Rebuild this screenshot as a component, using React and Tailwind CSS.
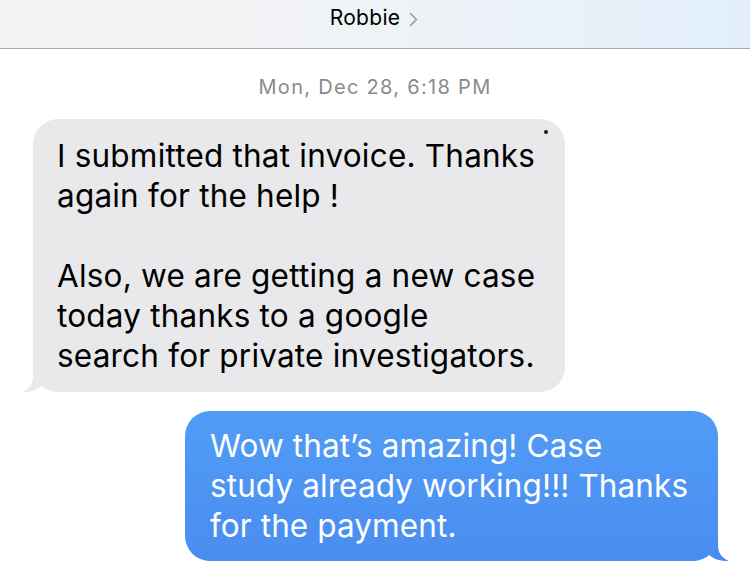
import React from 'react';

const font = { fontFamily: 'Inter, "Noto Sans", sans-serif' };

const LeftTail = ({ className }) => (
  <svg className={`absolute bottom-0 -left-[12px] w-[40px] h-[30px] ${className}`} viewBox="0 0 40 30">
    <path d="M12 0 V14 C12 22 8 27 1 30 C10 30.5 17 28 22 23 C26 27 32 30 40 30 V0 Z" fill="currentColor" />
  </svg>
);

const RightTail = ({ className }) => (
  <svg className={`absolute bottom-0 -right-[12px] w-[40px] h-[30px] ${className}`} viewBox="0 0 40 30">
    <path d="M28 0 V14 C28 22 32 27 39 30 C30 30.5 23 28 18 23 C14 27 8 30 0 30 V0 Z" fill="currentColor" />
  </svg>
);

export default function App() {
  return (
    <div className="w-[750px] h-[585px] bg-white overflow-hidden" style={font}>
      <div className="h-[49px] border-b border-[#a9a9ab] bg-gradient-to-r from-[#f2f2f3] via-[#f0f3f6] to-[#e2effb] flex items-start justify-center pt-[5px]">
        <div className="flex items-center gap-[9px] pr-[2px]">
          <span className="text-[21px] text-black leading-[26px] tracking-[0.3px]">Robbie</span>
          <svg width="9" height="15" viewBox="0 0 9 15" className="mt-[2px]">
            <path d="M1.5 1.5 L7.5 7.5 L1.5 13.5" fill="none" stroke="#9a9aa0" strokeWidth="1.6" strokeLinecap="round" strokeLinejoin="round" />
          </svg>
        </div>
      </div>

      <div className="text-center text-[20px] text-[#8a8a8e] leading-[24px] mt-[26px] tracking-[1.3px]">
        Mon, Dec 28, 6:18 PM
      </div>

      <div className="relative ml-[33px] mt-[20px] w-[532px]">
        <LeftTail className="text-[#e9e9eb]" />
        <div className="relative bg-[#e9e9eb] rounded-[25px] pl-[24px] pr-[10px] pt-[17px] pb-[16px] text-[31.5px] leading-[40px] text-black tracking-[0.2px] whitespace-nowrap">
          <div>I submitted that invoice. Thanks</div>
          <div>again for the help !</div>
          <div>&nbsp;</div>
          <div>Also, we are getting a new case</div>
          <div>today thanks to a google</div>
          <div>search for private investigators.</div>
          <span className="absolute left-[511px] top-[11px] w-[4px] h-[4px] rounded-full bg-[#1c1c1e]" />
        </div>
      </div>

      <div className="relative ml-[185px] mt-[19px] w-[533px]">
        <RightTail className="text-[#4a8df0]" />
        <div className="relative bg-gradient-to-b from-[#519cf6] to-[#4a8df0] rounded-[25px] pl-[25px] pr-[10px] pt-[15px] pb-[15px] text-[31.5px] leading-[40px] text-white tracking-[0.1px] whitespace-nowrap">
          <div>Wow that’s amazing! Case</div>
          <div>study already working!!! Thanks</div>
          <div>for the payment.</div>
        </div>
      </div>
    </div>
  );
}
